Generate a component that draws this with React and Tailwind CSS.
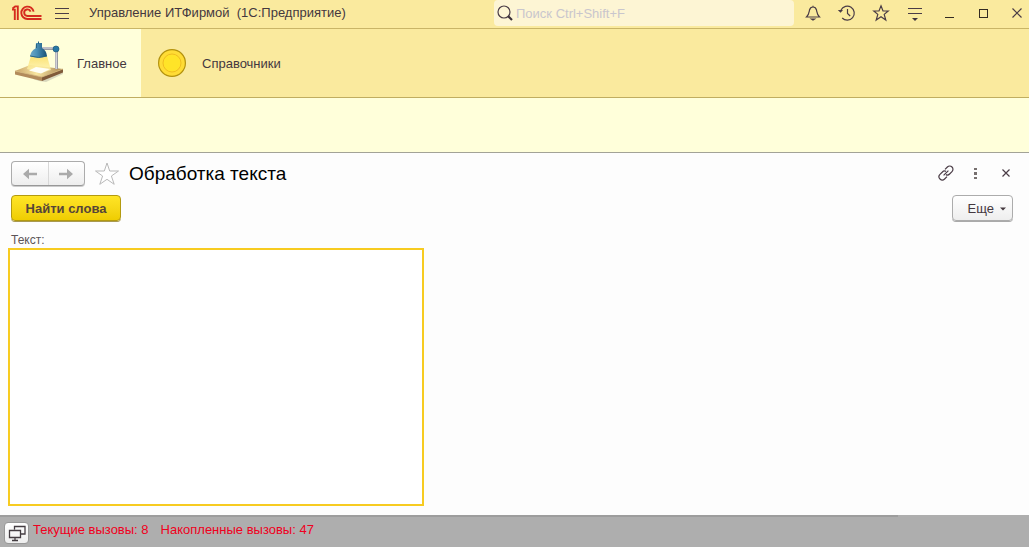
import React from 'react';

const stroke = { fill: 'none', stroke: '#4a3c46', strokeWidth: 1.2 };

function Logo() {
  return (
    <svg className="h-4 w-[30px] shrink-0" viewBox="0 0 30 16" fill="none" stroke="#d52b1e" strokeWidth="1.9">
      <path d="M0 4.6 H2.8 V15 M0.4 3.6 L3.2 1.4 H5.8 V15" />
      <path d="M21.6 6.6 A6.2 6.2 0 1 0 15.4 14 H29.5" />
      <path d="M18.6 6.6 A3.3 3.3 0 1 0 15.4 11 H29.5" />
    </svg>
  );
}

function Lamp() {
  return (
    <svg className="h-12 w-[52px] shrink-0" viewBox="0 0 52 48">
      <defs>
        <linearGradient id="shade" x1="0" x2="1">
          <stop offset="0" stopColor="#6fa9c8" />
          <stop offset=".4" stopColor="#4a90b6" />
          <stop offset="1" stopColor="#174f75" />
        </linearGradient>
        <linearGradient id="beam" x1="0" x2="0" y1="0" y2="1">
          <stop offset="0" stopColor="#fadb5c" />
          <stop offset="1" stopColor="#fff7bd" />
        </linearGradient>
        <linearGradient id="board" x1="0" x2="1">
          <stop offset="0" stopColor="#c8a368" />
          <stop offset=".45" stopColor="#f8e6a0" />
          <stop offset="1" stopColor="#a98555" />
        </linearGradient>
      </defs>
      <path d="M20 40 L50 33 V35 L33 43 L26 42Z" fill="#aaa99a" opacity=".45" />
      <path d="M2 32 L17 26 L50 30 L29 38Z" fill="url(#board)" />
      <path d="M2 32 L29 38 V42 L2 35.5Z" fill="#b28b5b" />
      <path d="M29 38 L50 30 V33.5 L29 42Z" fill="#805b3a" />
      <path d="M2 32 L29 38 L50 30" fill="none" stroke="#d5b87b" strokeWidth=".8" />
      <path d="M18 17 H34 L38 31 L28 34 L14 30Z" fill="url(#beam)" opacity=".8" />
      <path d="M16 31.5 L23 28 L37 30 L28 34.5Z" fill="#fffff6" />
      <path d="M29 9.5 H43 M43.5 12 V30" stroke="#9a9ba2" strokeWidth="3" fill="none" />
      <path d="M29 9 H42 M43.2 12 V30" stroke="#e0e0e8" strokeWidth="1.2" fill="none" />
      <circle cx="43" cy="10" r="3" fill="#2778a5" stroke="#1b5578" strokeWidth=".7" />
      <path d="M23 4 H29 V9 Q33.5 11.5 34 17 Q26 20 17 17 Q18 11.5 22.5 9.5Z" fill="url(#shade)" />
      <path d="M25.5 2.5 V5 M23.5 5 V9 M17 17 Q26 20 34 17" fill="none" stroke="#286484" />
    </svg>
  );
}

const titleIcons = [
  ['Уведомления', <path d="M3.5 14 H16.5 C14 11.5 14 9.5 13.5 7 C13 5 12 4 10 4 S7 5 6.5 7 C6 9.5 6 11.5 3.5 14Z M10 2.8 V4 M8.5 16 H11.5 L10 17Z" {...stroke} />],
  ['История', <><path d="M4 7 A7 7 0 1 1 5.2 15 M10.5 6 V10.5 L13.2 13" {...stroke} /><path d="M.8 7 H6 L3.6 9.8Z" fill="#4a3c46" /></>],
  ['Избранное', <path d="M10 2.8 L12 8 H17.2 L13.2 11.4 L14.8 17 L10 13.8 L5.2 17 L6.8 11.4 L2.8 8 H8Z" {...stroke} />],
  ['Настройки', <><path d="M3 5.5 H17 M3 10.5 H17" {...stroke} shapeRendering="crispEdges" /><path d="M7 15 H13 L10 18Z" fill="#40343c" /></>],
  ['Свернуть', <path d="M6 14.5 H15" {...stroke} stroke="#332b22" shapeRendering="crispEdges" />],
  ['Развернуть', <path d="M6.5 6.5 H14.5 V14.5 H6.5Z" {...stroke} stroke="#332b22" shapeRendering="crispEdges" />],
  ['Закрыть', <path d="M5.5 5.5 L14.5 14.5 M14.5 5.5 L5.5 14.5" {...stroke} />],
];

export default function App() {
  return (
    <div className="flex min-h-screen flex-col bg-[#fdfdfd] font-['Liberation_Sans',Arial,sans-serif] text-[13px] leading-4 text-[#44383f]">
      <header className="flex h-[29px] items-start border-b border-[#c9b567] bg-[#faea9e] pl-3">
        <div className="flex h-[26px] min-w-0 flex-1 items-center">
          <Logo />
          <button aria-label="Меню" className="ml-3 flex size-4 items-center justify-center">
            <svg className="size-4" viewBox="0 0 16 16"><path d="M1 3.5 H15 M1 8.5 H15 M1 13.5 H15" {...stroke} shapeRendering="crispEdges" /></svg>
          </button>
          <h1 className="ml-[19px] truncate whitespace-pre leading-[18px]">Управление ИТФирмой  (1С:Предприятие)</h1>
        </div>
        <label className="flex h-[26px] w-[300px] items-center gap-[3px] rounded-sm bg-[#fdf5d4] pl-[3px]">
          <svg className="size-4 shrink-0" viewBox="0 0 16 16"><circle cx="7" cy="7" r="6" {...stroke} /><path d="M11.2 11.2 L15 15" stroke="#3b3038" strokeWidth="2.2" /></svg>
          <input aria-label="Поиск" placeholder="Поиск Ctrl+Shift+F" className="min-w-0 flex-1 bg-transparent pt-0.5 outline-none placeholder:text-[#c9c6cd]" />
        </label>
        <div className="ml-[7px] flex h-[26px] items-center gap-2.5">
          {titleIcons.map(([name, icon]) => (
            <button key={name} aria-label={name} className="flex size-6 items-center justify-center">
              <svg className="size-5" viewBox="0 0 20 20">{icon}</svg>
            </button>
          ))}
        </div>
      </header>

      <nav className="flex h-[69px] border-b border-[#c0ad60] bg-[#faea9e]">
        <a href="#main" className="flex w-[141px] items-center gap-3 bg-[#ffffda] pl-[13px]">
          <Lamp /><span className="pt-0.5">Главное</span>
        </a>
        <a href="#catalogs" className="flex items-center gap-[15px] px-4">
          <svg className="size-[30px]" viewBox="0 0 30 30">
            <circle cx="15" cy="15" r="13.4" fill="#ffdc35" stroke="#b3920e" strokeWidth="1.2" />
            <circle cx="15" cy="15" r="9" fill="#ffe428" stroke="#f0bd20" />
          </svg>
          <span className="pt-0.5">Справочники</span>
        </a>
      </nav>
      <div className="h-[55px] border-b border-[#a3a397] bg-[#ffffda]" />

      <main className="flex flex-1 flex-col px-2 pt-2 pb-[9px]">
        <div className="flex items-center pr-[7px] pl-[3px]">
          <div className="flex h-[25px] w-[74px] rounded-sm border border-[#acacac] border-b-[#989898] bg-linear-to-b from-white to-[#eeeeee] shadow-[0_1px_0_#ccc]">
            <button aria-label="Назад" className="flex flex-1 items-center justify-center border-r border-[#d8d8d8]">
              <svg className="h-3 w-4" viewBox="0 0 16 12"><path d="M1 6 L7 .8 V4.8 H15 V7.2 H7 V11.2Z" fill="#aaa" /></svg>
            </button>
            <button aria-label="Вперед" className="flex flex-1 items-center justify-center">
              <svg className="h-3 w-4" viewBox="0 0 16 12"><path d="M15 6 L9 .8 V4.8 H1 V7.2 H9 V11.2Z" fill="#aaa" /></svg>
            </button>
          </div>
          <button aria-label="Добавить в избранное" className="ml-2.5">
            <svg className="size-6" viewBox="0 0 24 24"><path d="M12 1 L14.7 9 H23.5 L16.4 14 L19.2 22.3 L12 17.3 L4.8 22.3 L7.6 14 L.5 9 H9.3Z" fill="#fff" stroke="#b9b9b9" /></svg>
          </button>
          <h2 className="ml-[10px] flex-1 text-[19px] leading-6 text-black">Обработка текста</h2>
          <div className="flex items-center gap-3.5 pb-0.5">
            <button aria-label="Ссылка" className="flex size-4 items-center justify-center">
              <svg className="size-4" viewBox="0 0 16 16"><path d="M7 4.4 L9.4 2 A3 3 0 0 1 14 6.6 L11.6 9 A3 3 0 0 1 8 9.6 M9 11.6 L6.6 14 A3 3 0 0 1 2 9.4 L4.4 7 A3 3 0 0 1 8 6.4 M5.6 10.4 L10.4 5.6" {...stroke} /></svg>
            </button>
            <button aria-label="Дополнительно" className="flex size-4 items-center justify-center">
              <svg className="size-4" viewBox="0 0 16 16" fill="#77706f"><path d="M6 3h3v2H6z M6 7h3v3H6z M6 12h3v2H6z" /></svg>
            </button>
            <button aria-label="Закрыть форму" className="flex size-4 items-center justify-center">
              <svg className="size-4" viewBox="0 0 16 16"><path d="M4.5 4.5 L11.5 11.5 M11.5 4.5 L4.5 11.5" {...stroke} /></svg>
            </button>
          </div>
        </div>

        <div className="mt-[9px] flex justify-between pr-2 pl-[3px]">
          <button className="h-[26px] w-[110px] rounded-sm border border-[#b39a10] bg-linear-to-b from-[#ffe525] to-[#efcd00] pt-0.5 font-bold text-[#564538] shadow-[0_1px_0_#a99a50]">Найти слова</button>
          <button className="flex h-[26px] w-[61px] items-center justify-end gap-1.5 rounded-sm border border-[#acacac] bg-linear-to-b from-white to-[#eeeeee] pt-0.5 pr-1.5 shadow-[0_1px_0_#aaa]">
            Еще
            <svg className="h-1 w-[6px]" viewBox="0 0 6 4"><path d="M0 .5 H6 L3 3.5Z" fill="#44383f" /></svg>
          </button>
        </div>

        <label htmlFor="source" className="mt-[11px] pl-[3px] text-xs leading-4 text-[#5c5458]">Текст:</label>
        <textarea id="source" className="w-[416px] max-w-full flex-1 resize-none border-2 border-[#f7cb20] bg-white p-1 outline-none" />
      </main>

      <footer className="flex h-8 flex-col bg-[#aeaeae] text-[#f00020]">
        <div className="h-0.5 w-[87.3%] bg-[#9d9d9d]" />
        <div className="flex flex-1 items-center pl-1">
          <button aria-label="Окна" className="mt-0.5 flex h-[22px] w-[25px] items-center justify-center rounded-sm border border-[#989898] bg-linear-to-b from-white to-[#eeeeee]">
            <svg className="size-[18px]" viewBox="0 0 18 18" {...stroke} stroke="#443d42" strokeWidth="1.3"><path d="M6.5 5.5 V2.5 H17 V10 H13 M1.5 6.5 H12.5 V13.5 H1.5Z M7 14 V16 M4 16.5 H10" /></svg>
          </button>
          <p className="mb-1 ml-1 flex gap-3"><span>Текущие вызовы: 8</span><span>Накопленные вызовы: 47</span></p>
        </div>
      </footer>
    </div>
  );
}
